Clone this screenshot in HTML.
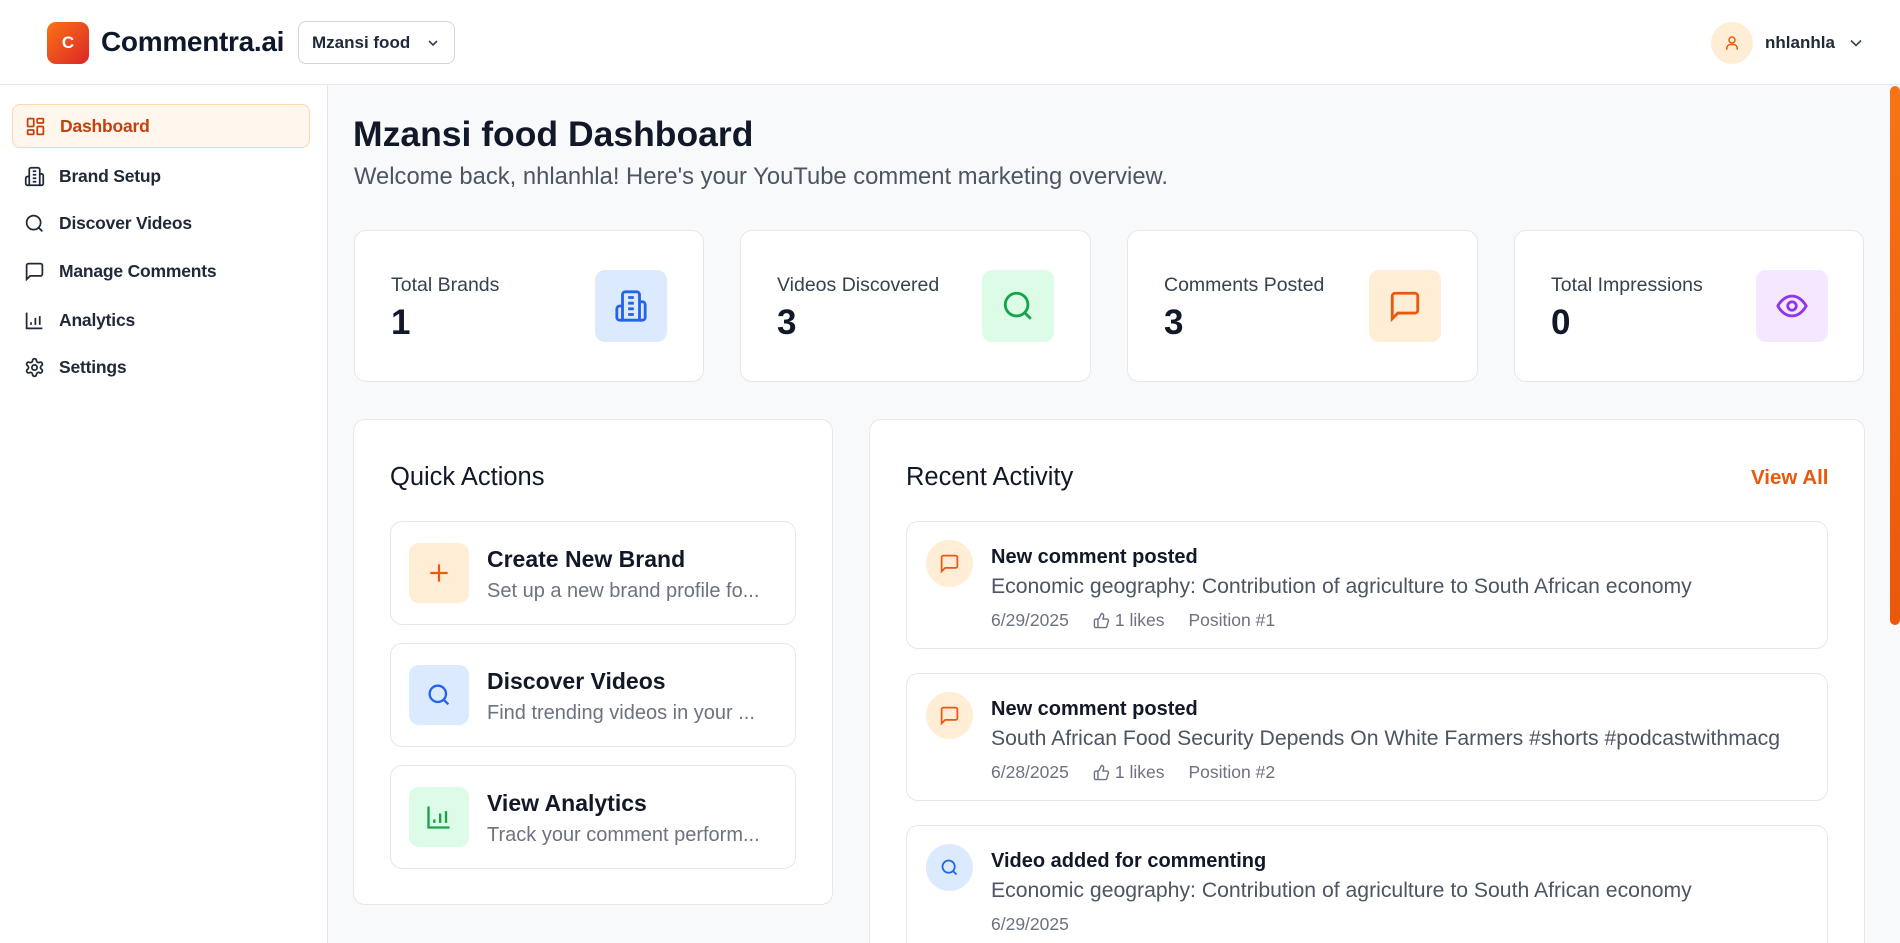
<!DOCTYPE html>
<html style="overflow:hidden;width:1900px;height:943px"><head><meta charset="utf-8"><style>
*{box-sizing:border-box;margin:0;padding:0}
html,body{overflow:hidden}
body{width:1900px;height:943px;background:#f8f9fb;font-family:"Liberation Sans",sans-serif;color:#111827;position:relative}
#wrap{position:absolute;left:0;top:0;width:1900px;height:943px;overflow:hidden}
.abs{position:absolute}
svg{display:block}
.hdr{left:0;top:0;width:1900px;height:85px;background:#fff;border-bottom:1px solid #e5e7eb}
.side{left:0;top:85px;width:328px;height:858px;background:#fff;border-right:1px solid #e5e7eb}
.nav{left:12px;width:298px;height:44px;display:flex;align-items:center;padding-left:12px;font-size:17.5px;color:#1f2937;font-weight:bold;letter-spacing:-0.2px}
.nav svg{margin-right:14px}
.nav.act{background:#fff7ed;border:1px solid #fed7aa;border-radius:8px;color:#c2410c}
.card{background:#fff;border:1px solid #e5e7eb;border-radius:12px}
.lbl{font-size:19.5px;color:#374151}
.val{font-size:35px;font-weight:bold;color:#111827}
.ib{width:72px;height:72px;border-radius:10px;display:flex;align-items:center;justify-content:center}
.qa{left:390px;width:406px;height:104px}
.qa .ic{position:absolute;left:18px;top:21px;width:60px;height:60px;border-radius:10px;display:flex;align-items:center;justify-content:center}
.qa .t{position:absolute;left:96px;top:24px;font-size:23px;font-weight:bold;color:#111827}
.qa .s{position:absolute;left:96px;top:58px;font-size:20px;color:#6b7280;white-space:nowrap}
.ra{left:906px;width:922px;height:128px}
.ra .ic{position:absolute;left:19px;top:18px;width:47px;height:47px;border-radius:50%;display:flex;align-items:center;justify-content:center}
.ra .t{position:absolute;left:84px;top:24px;font-size:20px;font-weight:bold;color:#111827}
.ra .s{position:absolute;left:84px;top:53px;font-size:21.2px;color:#4b5563;white-space:nowrap}
.ra .m{position:absolute;left:84px;top:88px;font-size:17.5px;color:#6b7280;display:flex;align-items:center;white-space:nowrap}
</style></head><body><div id="wrap">
<div class="abs hdr"></div>
<div class="abs" style="left:47px;top:22px;width:42px;height:42px;border-radius:9px;background:linear-gradient(135deg,#f97316,#dc2626);color:#fff;font-weight:bold;font-size:17px;display:flex;align-items:center;justify-content:center">C</div>
<div class="abs" style="left:101px;top:26px;font-size:28px;font-weight:bold;color:#0f172a;letter-spacing:-0.3px">Commentra.ai</div>
<div class="abs" style="left:298px;top:21px;width:157px;height:43px;border:1px solid #d1d5db;border-radius:8px;background:#fff;display:flex;align-items:center;padding-left:13px;font-size:17px;color:#1f2937;font-weight:bold">Mzansi food
<svg style="position:absolute;right:15px;top:16px" width="12" height="10" viewBox="0 0 12 10"><path d="M2 3l4 4 4-4" fill="none" stroke="#374151" stroke-width="1.6"/></svg></div>
<div class="abs" style="left:1711px;top:22px;width:42px;height:42px;border-radius:50%;background:#ffedd5;display:flex;align-items:center;justify-content:center"><svg width="18" height="18" viewBox="0 0 24 24" fill="none" stroke="#ea580c" stroke-width="2"><circle cx="12" cy="8" r="4"/><path d="M5 21v-2a5 5 0 0 1 5-5h4a5 5 0 0 1 5 5v2"/></svg></div>
<div class="abs" style="left:1765px;top:33px;font-size:17px;font-weight:bold;color:#1f2937">nhlanhla</div>
<svg class="abs" style="left:1850px;top:39px" width="12" height="8" viewBox="0 0 12 8"><path d="M1 1.5l5 5 5-5" fill="none" stroke="#374151" stroke-width="1.6"/></svg>

<div class="abs side"></div>
<div class="abs nav act" style="top:104px"><svg width="21" height="21" viewBox="0 0 24 24" fill="none" stroke="#c2410c" stroke-width="2"><rect x="3" y="3" width="7" height="9" rx="1"/><rect x="14" y="3" width="7" height="5" rx="1"/><rect x="14" y="12" width="7" height="9" rx="1"/><rect x="3" y="16" width="7" height="5" rx="1"/></svg>Dashboard</div>
<div class="abs nav" style="top:154px"><svg width="21" height="21" viewBox="0 0 24 24" fill="none" stroke="#1f2937" stroke-width="2"><path d="M6 22V4a2 2 0 0 1 2-2h8a2 2 0 0 1 2 2v18z"/><path d="M6 12H4a2 2 0 0 0-2 2v6a2 2 0 0 0 2 2h2M18 9h2a2 2 0 0 1 2 2v9a2 2 0 0 1-2 2h-2M10 6h4M10 10h4M10 14h4M10 18h4"/></svg>Brand Setup</div>
<div class="abs nav" style="top:201px"><svg width="21" height="21" viewBox="0 0 24 24" fill="none" stroke="#1f2937" stroke-width="2"><circle cx="11" cy="11" r="8"/><path d="m21 21-4.3-4.3"/></svg>Discover Videos</div>
<div class="abs nav" style="top:249px"><svg width="21" height="21" viewBox="0 0 24 24" fill="none" stroke="#1f2937" stroke-width="2"><path d="M21 15a2 2 0 0 1-2 2H7l-4 4V5a2 2 0 0 1 2-2h14a2 2 0 0 1 2 2z"/></svg>Manage Comments</div>
<div class="abs nav" style="top:298px"><svg width="21" height="21" viewBox="0 0 24 24" fill="none" stroke="#1f2937" stroke-width="2"><path d="M3 3v18h18M8 17v-3M13 17V9M18 17V7"/></svg>Analytics</div>
<div class="abs nav" style="top:345px"><svg width="21" height="21" viewBox="0 0 24 24" fill="none" stroke="#1f2937" stroke-width="2"><circle cx="12" cy="12" r="3"/><path d="M12.22 2h-.44a2 2 0 0 0-2 2v.18a2 2 0 0 1-1 1.730l-.43.25a2 2 0 0 1-2 0l-.15-.08a2 2 0 0 0-2.73.73l-.22.38a2 2 0 0 0 .73 2.73l.15.1a2 2 0 0 1 1 1.72v.51a2 2 0 0 1-1 1.74l-.15.09a2 2 0 0 0-.73 2.73l.22.38a2 2 0 0 0 2.73.73l.15-.08a2 2 0 0 1 2 0l.43.25a2 2 0 0 1 1 1.73V20a2 2 0 0 0 2 2h.44a2 2 0 0 0 2-2v-.18a2 2 0 0 1 1-1.73l.43-.25a2 2 0 0 1 2 0l.15.08a2 2 0 0 0 2.73-.73l.22-.39a2 2 0 0 0-.73-2.730l-.15-.08a2 2 0 0 1-1-1.74v-.5a2 2 0 0 1 1-1.74l.15-.09a2 2 0 0 0 .73-2.73l-.22-.38a2 2 0 0 0-2.73-.73l-.15.08a2 2 0 0 1-2 0l-.43-.25a2 2 0 0 1-1-1.73V4a2 2 0 0 0-2-2z"/></svg>Settings</div>

<div class="abs" style="left:353px;top:114px;font-size:35.5px;font-weight:bold;color:#111827">Mzansi food Dashboard</div>
<div class="abs" style="left:354px;top:163px;font-size:23.8px;color:#4b5563">Welcome back, nhlanhla! Here's your YouTube comment marketing overview.</div>

<div class="abs card" style="left:354px;top:230px;width:350px;height:152px"><div class="abs lbl" style="left:36px;top:43px">Total Brands</div><div class="abs val" style="left:36px;top:72px">1</div><div class="abs ib" style="left:240px;top:39px;background:#dbeafe"><svg width="34" height="34" viewBox="0 0 24 24" fill="none" stroke="#2563eb" stroke-width="2"><path d="M6 22V4a2 2 0 0 1 2-2h8a2 2 0 0 1 2 2v18z"/><path d="M6 12H4a2 2 0 0 0-2 2v6a2 2 0 0 0 2 2h2M18 9h2a2 2 0 0 1 2 2v9a2 2 0 0 1-2 2h-2M10 6h4M10 10h4M10 14h4M10 18h4"/></svg></div></div>
<div class="abs card" style="left:740px;top:230px;width:351px;height:152px"><div class="abs lbl" style="left:36px;top:43px">Videos Discovered</div><div class="abs val" style="left:36px;top:72px">3</div><div class="abs ib" style="left:241px;top:39px;background:#dcfce7"><svg width="34" height="34" viewBox="0 0 24 24" fill="none" stroke="#16a34a" stroke-width="2"><circle cx="11" cy="11" r="8"/><path d="m21 21-4.3-4.3"/></svg></div></div>
<div class="abs card" style="left:1127px;top:230px;width:351px;height:152px"><div class="abs lbl" style="left:36px;top:43px">Comments Posted</div><div class="abs val" style="left:36px;top:72px">3</div><div class="abs ib" style="left:241px;top:39px;background:#ffedd5"><svg width="34" height="34" viewBox="0 0 24 24" fill="none" stroke="#ea580c" stroke-width="2"><path d="M21 15a2 2 0 0 1-2 2H7l-4 4V5a2 2 0 0 1 2-2h14a2 2 0 0 1 2 2z"/></svg></div></div>
<div class="abs card" style="left:1514px;top:230px;width:350px;height:152px"><div class="abs lbl" style="left:36px;top:43px">Total Impressions</div><div class="abs val" style="left:36px;top:72px">0</div><div class="abs ib" style="left:241px;top:39px;background:#f3e8ff"><svg width="34" height="34" viewBox="0 0 24 24" fill="none" stroke="#9333ea" stroke-width="2"><path d="M2 12s3.5-7 10-7 10 7 10 7-3.5 7-10 7S2 12 2 12z"/><circle cx="12" cy="12" r="3"/></svg></div></div>

<div class="abs card" style="left:353px;top:419px;width:480px;height:486px"></div>
<div class="abs" style="left:390px;top:463px;font-size:25.5px;color:#111827">Quick Actions</div>
<div class="abs card qa" style="top:521px"><div class="ic" style="background:#ffedd5"><svg width="26" height="26" viewBox="0 0 24 24" fill="none" stroke="#ea580c" stroke-width="2"><path d="M12 4v16M4 12h16"/></svg></div><div class="t">Create New Brand</div><div class="s">Set up a new brand profile fo...</div></div>
<div class="abs card qa" style="top:643px"><div class="ic" style="background:#dbeafe"><svg width="28" height="28" viewBox="0 0 24 24" fill="none" stroke="#2563eb" stroke-width="2"><circle cx="11" cy="11" r="7"/><path d="m20 20-4-4"/></svg></div><div class="t">Discover Videos</div><div class="s">Find trending videos in your ...</div></div>
<div class="abs card qa" style="top:765px"><div class="ic" style="background:#dcfce7"><svg width="28" height="28" viewBox="0 0 24 24" fill="none" stroke="#16a34a" stroke-width="2"><path d="M3 3v18h18M8 17v-3M13 17V9M18 17V7"/></svg></div><div class="t">View Analytics</div><div class="s">Track your comment perform...</div></div>

<div class="abs card" style="left:869px;top:419px;width:996px;height:560px"></div>
<div class="abs" style="left:906px;top:463px;font-size:25.5px;color:#111827">Recent Activity</div>
<div class="abs" style="left:1751px;top:466px;font-size:20.5px;font-weight:bold;color:#ea580c">View All</div>

<div class="abs card ra" style="top:521px"><div class="ic" style="background:#ffedd5"><svg width="21" height="21" viewBox="0 0 24 24" fill="none" stroke="#ea580c" stroke-width="2"><path d="M21 15a2 2 0 0 1-2 2H7l-4 4V5a2 2 0 0 1 2-2h14a2 2 0 0 1 2 2z"/></svg></div><div class="t">New comment posted</div><div class="s">Economic geography: Contribution of agriculture to South African economy</div><div class="m">6/29/2025<svg style="margin:0 5px 0 24px" width="17" height="17" viewBox="0 0 24 24" fill="none" stroke="#6b7280" stroke-width="2"><path d="M7 10v12M15 5.88 14 10h5.83a2 2 0 0 1 1.92 2.56l-2.33 8A2 2 0 0 1 17.5 22H4a2 2 0 0 1-2-2v-8a2 2 0 0 1 2-2h2.76a2 2 0 0 0 1.79-1.11L12 2a3.130 3.13 0 0 1 3 3.88z"/></svg>1 likes<span style="margin-left:24px">Position #1</span></div></div>
<div class="abs card ra" style="top:673px"><div class="ic" style="background:#ffedd5"><svg width="21" height="21" viewBox="0 0 24 24" fill="none" stroke="#ea580c" stroke-width="2"><path d="M21 15a2 2 0 0 1-2 2H7l-4 4V5a2 2 0 0 1 2-2h14a2 2 0 0 1 2 2z"/></svg></div><div class="t">New comment posted</div><div class="s">South African Food Security Depends On White Farmers #shorts #podcastwithmacg</div><div class="m">6/28/2025<svg style="margin:0 5px 0 24px" width="17" height="17" viewBox="0 0 24 24" fill="none" stroke="#6b7280" stroke-width="2"><path d="M7 10v12M15 5.88 14 10h5.83a2 2 0 0 1 1.92 2.56l-2.33 8A2 2 0 0 1 17.5 22H4a2 2 0 0 1-2-2v-8a2 2 0 0 1 2-2h2.76a2 2 0 0 0 1.79-1.11L12 2a3.13 3.13 0 0 1 3 3.88z"/></svg>1 likes<span style="margin-left:24px">Position #2</span></div></div>
<div class="abs card ra" style="top:825px;height:140px"><div class="ic" style="background:#dbeafe"><svg width="21" height="21" viewBox="0 0 24 24" fill="none" stroke="#2563eb" stroke-width="2"><circle cx="11" cy="11" r="7"/><path d="m20 20-4-4"/></svg></div><div class="t">Video added for commenting</div><div class="s">Economic geography: Contribution of agriculture to South African economy</div><div class="m">6/29/2025</div></div>

<div class="abs" style="left:1888px;top:85px;width:12px;height:858px;background:#f8f9fb"></div>
<div class="abs" style="left:1890px;top:86px;width:10px;height:539px;border-radius:5px;background:linear-gradient(#f97316,#ea580c)"></div>
</div></body></html>
